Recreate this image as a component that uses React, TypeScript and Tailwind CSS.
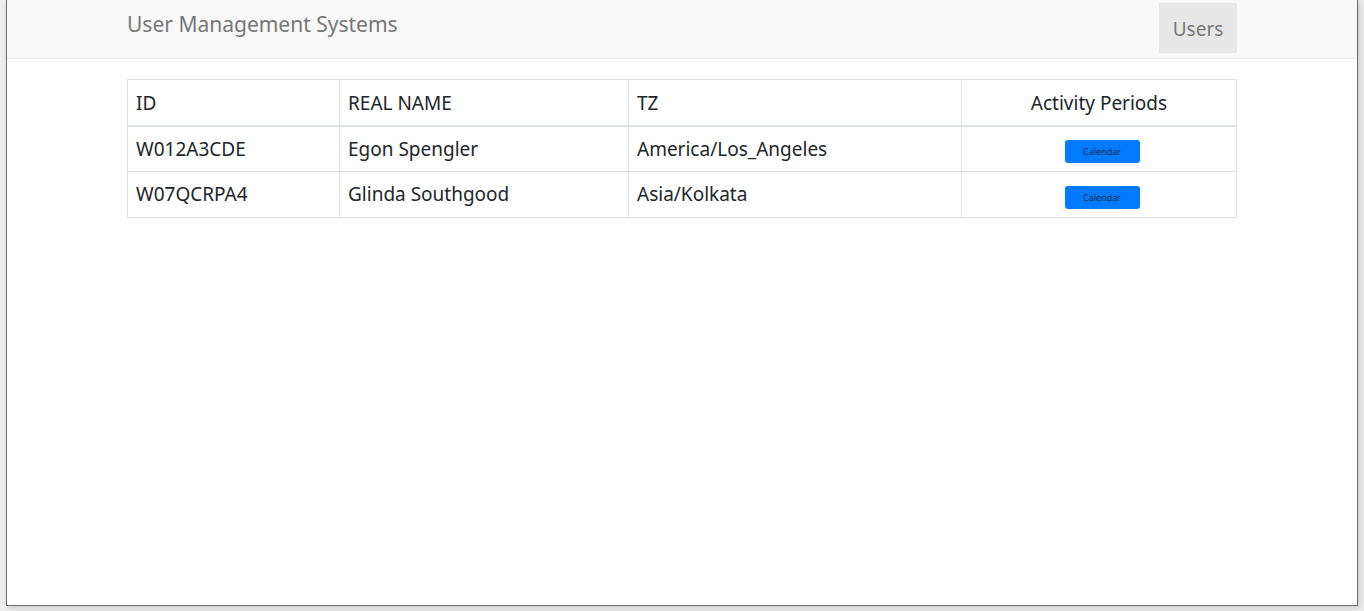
const users = [
  { id: "W012A3CDE", name: "Egon Spengler", tz: "America/Los_Angeles" },
  { id: "W07QCRPA4", name: "Glinda Southgood", tz: "Asia/Kolkata" },
];

export default function App() {
  return (
    <div
      className="h-[611px] w-[1364px] overflow-hidden bg-[#ededed]"
      style={{ fontFamily: '"Noto Sans", "Open Sans", sans-serif' }}
    >
      <div className="ml-[6px] h-[606px] w-[1352px] border-x border-b border-[#6e6e6e] bg-white shadow-[2px_2px_6px_rgba(0,0,0,0.15)]">
        {/* navbar */}
        <nav className="h-[59px] border-b border-[#e7e7e7] bg-[#f8f8f8]">
          <div className="mx-auto flex h-full w-[1110px] items-start justify-between">
            <div className="pt-[9px] text-[21px] leading-[30px] text-[#777]">
              User Management Systems
            </div>
            <div className="mt-[3px] flex h-[50px] w-[78px] items-center justify-center bg-[#e7e7e7] pt-[2px] text-[19px] text-[#777]">
              Users
            </div>
          </div>
        </nav>

        {/* table */}
        <div className="mx-auto mt-[20px] w-[1110px]">
          <table className="w-full border-collapse text-[19px] text-[#212529]">
            <thead>
              <tr className="h-[46px]">
                <th className="w-[212px] border border-b-2 border-[#dee2e6] px-[8px] pt-[2px] text-left font-normal">
                  ID
                </th>
                <th className="w-[289px] border border-b-2 border-[#dee2e6] px-[8px] pt-[2px] text-left font-normal">
                  REAL NAME
                </th>
                <th className="w-[333px] border border-b-2 border-[#dee2e6] px-[8px] pt-[2px] text-left font-normal">
                  TZ
                </th>
                <th className="border border-b-2 border-[#dee2e6] px-[8px] pt-[2px] text-center font-normal">
                  Activity Periods
                </th>
              </tr>
            </thead>
            <tbody>
              {users.map((u) => (
                <tr key={u.id} className="h-[46px]">
                  <td className="border border-[#dee2e6] px-[8px]">{u.id}</td>
                  <td className="border border-[#dee2e6] px-[8px]">{u.name}</td>
                  <td className="border border-[#dee2e6] px-[8px]">{u.tz}</td>
                  <td className="border border-[#dee2e6] pr-[8px] pl-[14px] pb-[1px] text-center">
                    <button className="h-[23px] w-[75px] rounded-[3px] bg-[#007bff] text-[9px] leading-none text-[#1b2a4a]">
                      Calendar
                    </button>
                  </td>
                </tr>
              ))}
            </tbody>
          </table>
        </div>
      </div>
    </div>
  );
}
